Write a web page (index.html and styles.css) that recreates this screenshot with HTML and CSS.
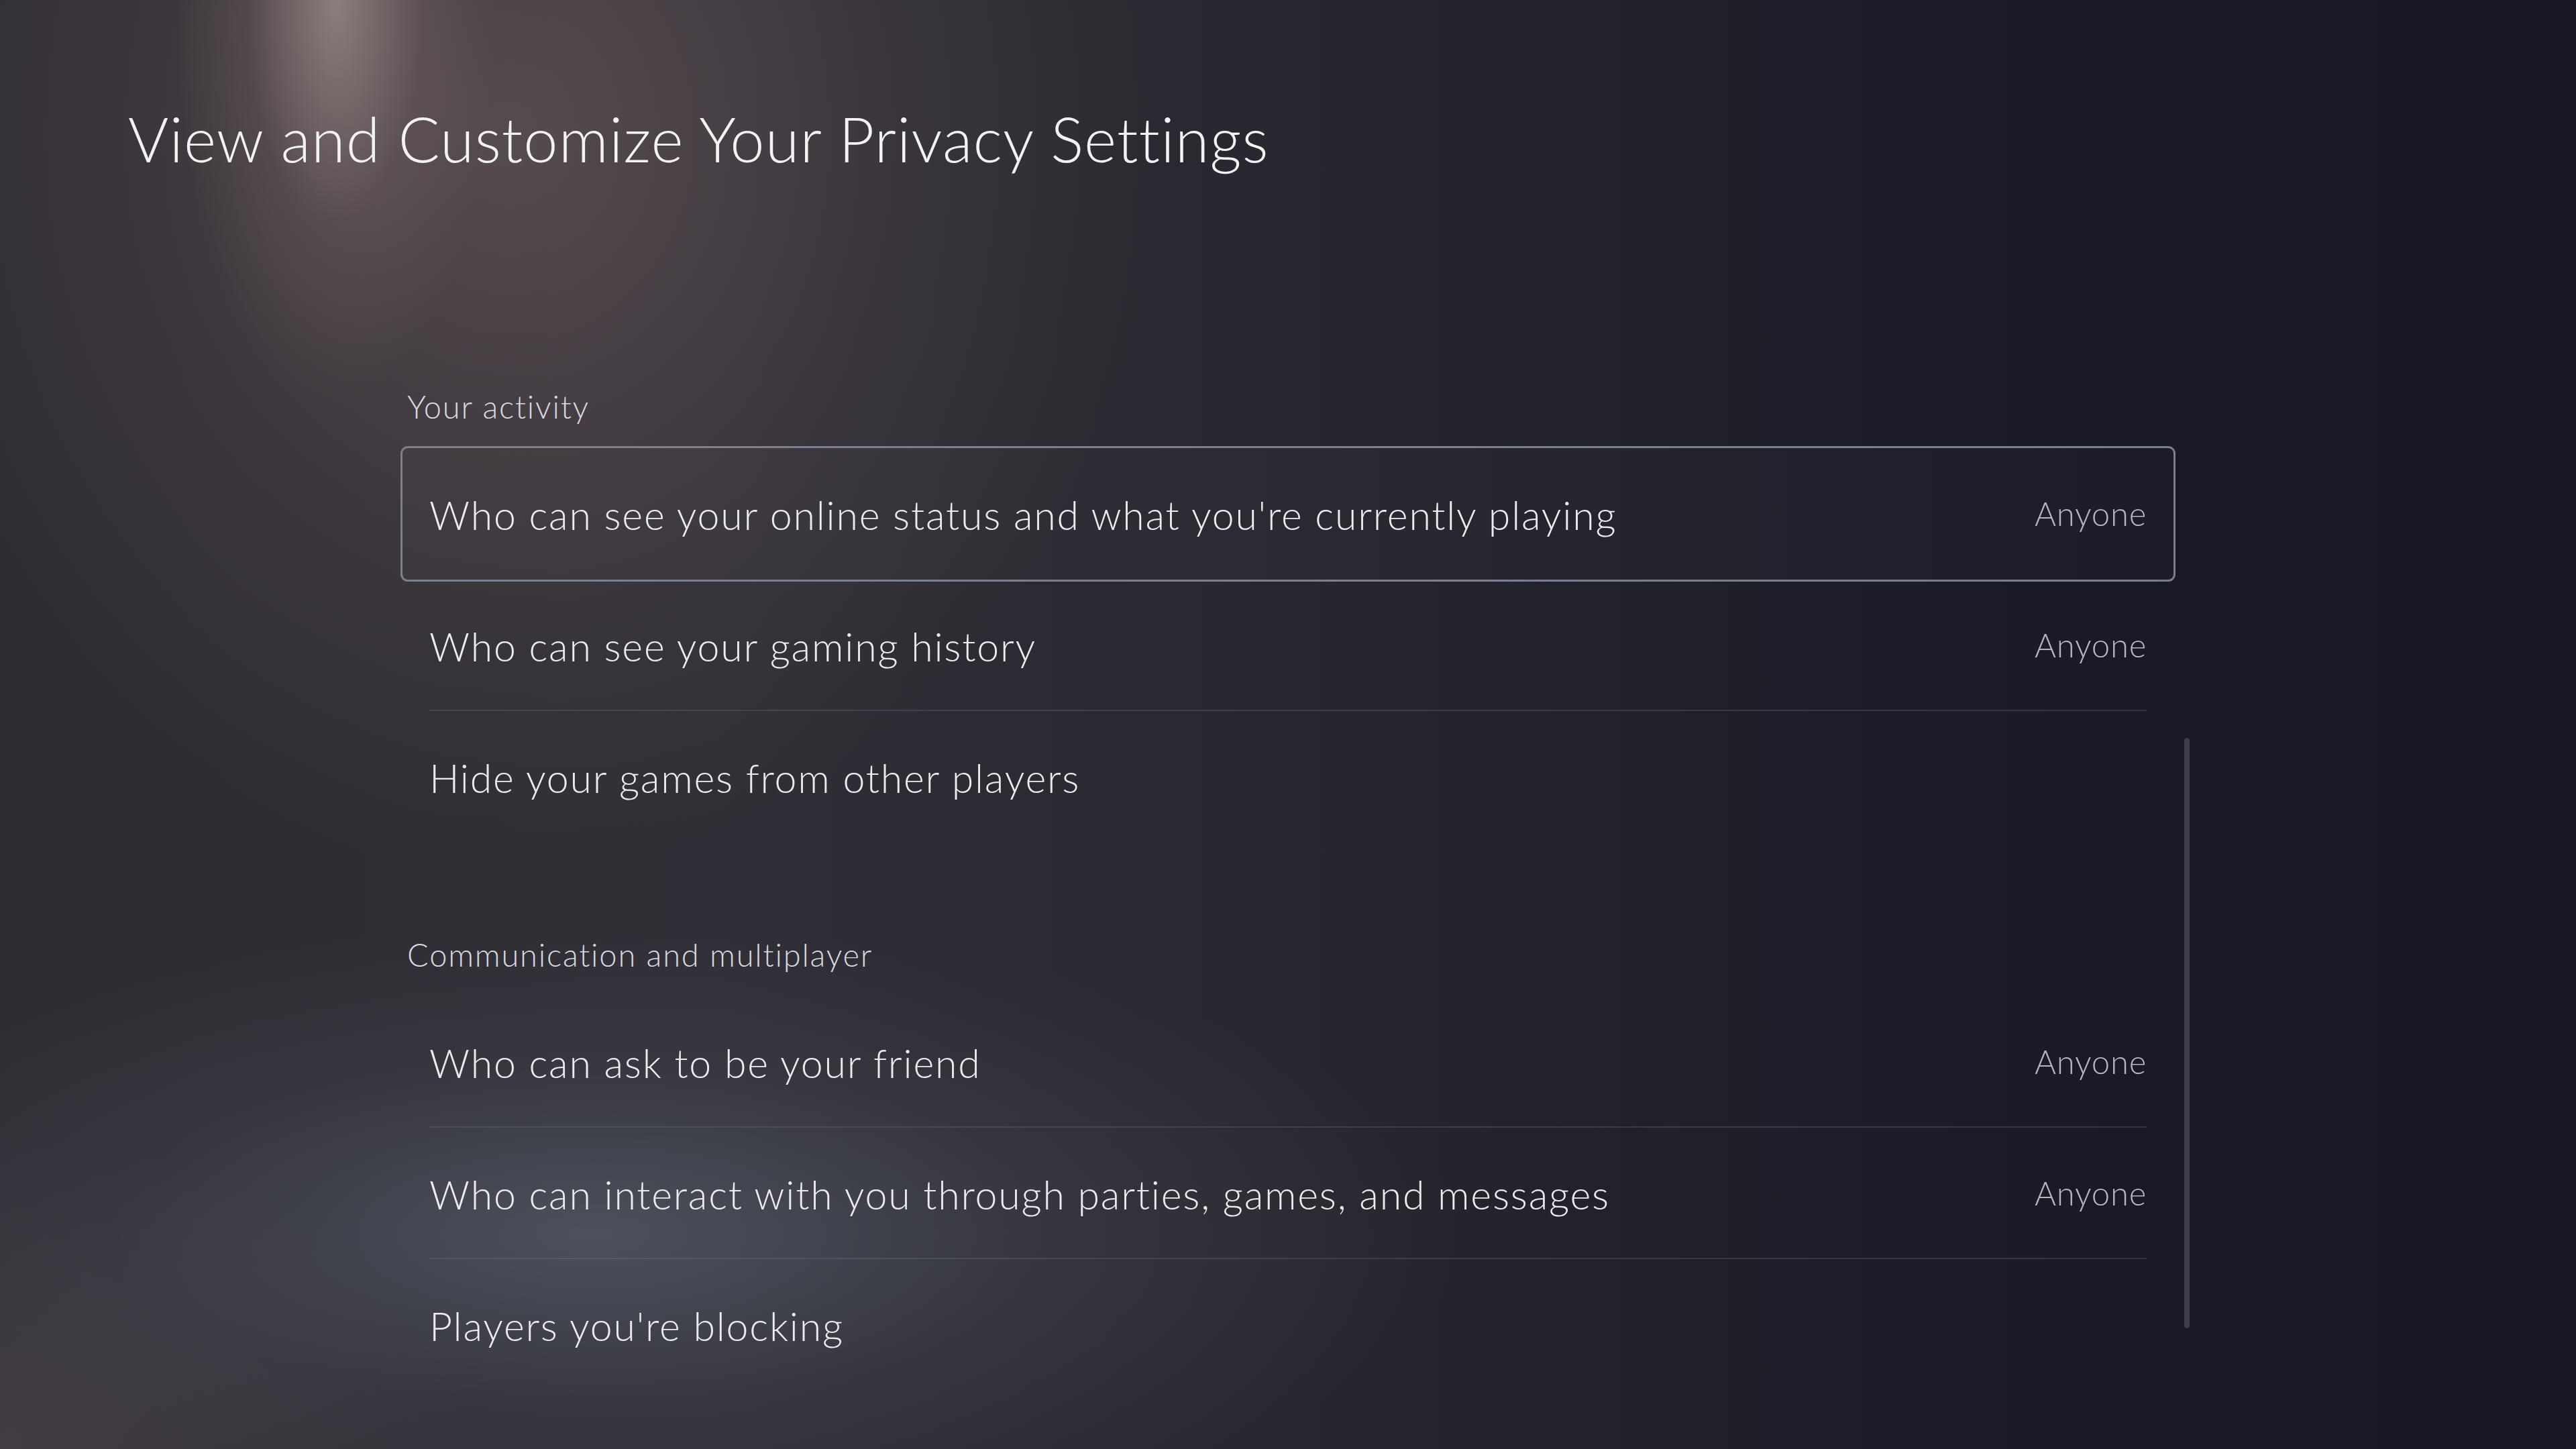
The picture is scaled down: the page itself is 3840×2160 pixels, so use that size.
FILE: index.html
```html
<!DOCTYPE html>
<html lang="en">
<head>
    <meta charset="UTF-8">
    <meta name="viewport" content="width=device-width, initial-scale=1.0">
    <title>Privacy Settings</title>
    <link rel="stylesheet" href="styles.css">
</head>
<body>
    <div class="screen">
        <h1 class="page-title">View and Customize Your Privacy Settings</h1>

        <div class="content">
            <div class="list">
                <!-- Your activity -->
                <section class="group">
                    <div class="group-title">Your activity</div>
                    <div class="row focused">
                        <div class="row-inner">
                            <span class="label">Who can see your online status and what you're currently playing</span>
                            <span class="value">Anyone</span>
                        </div>
                    </div>
                    <div class="row">
                        <div class="row-inner">
                            <span class="label">Who can see your gaming history</span>
                            <span class="value">Anyone</span>
                        </div>
                    </div>
                    <div class="row">
                        <div class="row-inner">
                            <span class="label">Hide your games from other players</span>
                        </div>
                    </div>
                </section>

                <!-- Communication and multiplayer -->
                <section class="group">
                    <div class="group-title">Communication and multiplayer</div>
                    <div class="row">
                        <div class="row-inner">
                            <span class="label">Who can ask to be your friend</span>
                            <span class="value">Anyone</span>
                        </div>
                    </div>
                    <div class="row">
                        <div class="row-inner">
                            <span class="label">Who can interact with you through parties, games, and messages</span>
                            <span class="value">Anyone</span>
                        </div>
                    </div>
                    <div class="row">
                        <div class="row-inner">
                            <span class="label">Players you're blocking</span>
                        </div>
                    </div>
                </section>
            </div>

            <div class="scroll-track">
                <div class="scroll-thumb"></div>
            </div>
        </div>
    </div>
</body>
</html>
```

FILE: styles.css
```css
html, body {
    margin: 0;
    padding: 0;
}
body {
    font-family: Lato, "Open Sans", sans-serif;
    font-weight: 300;
    color: #ececef;
    background: #181925;
}
.screen {
    width: 3840px;
    height: 2160px;
    overflow: hidden;
    box-sizing: border-box;
    padding-top: 153px;
    background:
        radial-gradient(ellipse 240px 600px at 500px 0px, rgba(170,152,148,0.7), rgba(130,112,110,0.25) 55%, rgba(0,0,0,0) 100%),
        radial-gradient(ellipse 1100px 1250px at 760px 200px, rgba(112,96,98,0.6), rgba(90,76,80,0.3) 50%, rgba(0,0,0,0) 88%),
        radial-gradient(ellipse 1300px 460px at 880px 1840px, rgba(94,102,114,0.62), rgba(72,78,90,0.3) 55%, rgba(0,0,0,0) 100%),
        radial-gradient(ellipse 700px 460px at 0px 2160px, rgba(78,66,72,0.65), rgba(0,0,0,0) 100%),
        linear-gradient(90deg, #2e2c33 0%, #302e36 28%, #292830 48%, #1f1f2a 68%, #181925 85%, #171824 100%);
}
.page-title {
    margin: 0;
    padding-left: 191px;
    font-size: 92px;
    font-weight: 300;
    letter-spacing: 1.1px;
    line-height: 108px;
    color: #f3f3f5;
}
.content {
    display: flex;
    margin-top: 315px;
    margin-left: 600px;
}
.list {
    width: 2640px;
}
.group + .group {
    margin-top: 137px;
}
.group-title {
    padding-left: 7px;
    margin-bottom: 32px;
    font-size: 47px;
    letter-spacing: 1.8px;
    line-height: 60px;
    color: #d9d9de;
}
.row {
    height: 196px;
}
.row.focused {
    border-radius: 8px;
    background: rgba(255,255,255,0.015);
    box-shadow: 0 0 0 3px #7b7f8f;
}
.row-inner {
    height: 100%;
    margin: 0 40px;
    box-sizing: border-box;
    display: flex;
    align-items: center;
    justify-content: space-between;
    border-bottom: 2px solid rgba(120,122,138,0.28);
}
.row.focused .row-inner,
.row:last-child .row-inner {
    border-bottom-color: transparent;
}
.label {
    font-size: 59px;
    letter-spacing: 1.8px;
    color: #ececef;
    padding-top: 4px;
}
.value {
    font-size: 49px;
    letter-spacing: 0.8px;
    color: #b5b7bf;
}
.scroll-track {
    margin-left: 16px;
    width: 8px;
}
.scroll-thumb {
    margin-top: 524px;
    height: 880px;
    border-radius: 4px;
    background: #3d3e4a;
}
```
